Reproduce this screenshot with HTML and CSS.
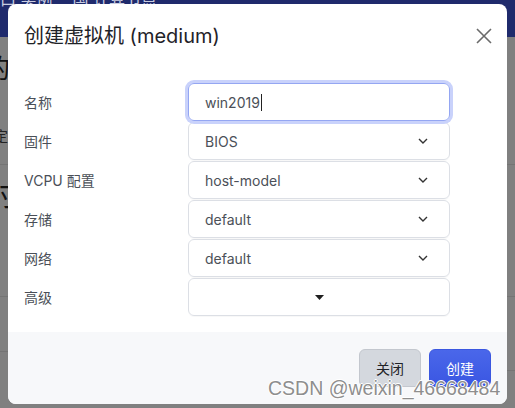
FILE: index.html
```html
<!DOCTYPE html>
<html lang="zh">
<head>
<meta charset="utf-8">
<title>创建虚拟机</title>
<link rel="stylesheet" href="styles.css">
</head>
<body>
<div class="page">
  <div class="nav">
    <span class="nav-item">口 实例</span>
    <span class="nav-item">国 计算节点</span>
  </div>
  <div class="content">
    <div class="sec sec1">
      <div class="big">的</div>
      <div class="small">定</div>
    </div>
    <div class="sec sec2">
      <div class="big2">村</div>
    </div>
    <div class="sec3">
      <div class="half-l"></div>
      <div class="half-r"></div>
    </div>
  </div>
</div>

<div class="modal">
  <div class="modal-header">
    <h1 class="title">创建虚拟机 (medium)</h1>
    <svg class="close" width="16" height="16" viewBox="0 0 16 16"><path d="M1 1 L15 15 M15 1 L1 15" stroke="#6b6b6b" stroke-width="1.6" fill="none"/></svg>
  </div>
  <div class="modal-body">
    <div class="label">名称</div>
    <div class="field input-focus"><span class="value">win2019</span><span class="cursor"></span></div>

    <div class="label">固件</div>
    <div class="field select"><span class="value">BIOS</span><svg class="chev" width="10" height="6" viewBox="0 0 10 6"><path d="M1 1 L5 5 L9 1" stroke="#333" stroke-width="1.4" fill="none"/></svg></div>

    <div class="label">VCPU 配置</div>
    <div class="field select"><span class="value">host-model</span><svg class="chev" width="10" height="6" viewBox="0 0 10 6"><path d="M1 1 L5 5 L9 1" stroke="#333" stroke-width="1.4" fill="none"/></svg></div>

    <div class="label">存储</div>
    <div class="field select"><span class="value">default</span><svg class="chev" width="10" height="6" viewBox="0 0 10 6"><path d="M1 1 L5 5 L9 1" stroke="#333" stroke-width="1.4" fill="none"/></svg></div>

    <div class="label">网络</div>
    <div class="field select"><span class="value">default</span><svg class="chev" width="10" height="6" viewBox="0 0 10 6"><path d="M1 1 L5 5 L9 1" stroke="#333" stroke-width="1.4" fill="none"/></svg></div>

    <div class="label">高级</div>
    <div class="field advanced"><svg width="9" height="5" viewBox="0 0 9 5"><path d="M0 0 H9 L4.5 5 Z" fill="#1f1f1f"/></svg></div>
  </div>
  <div class="modal-footer">
    <button class="btn btn-close">关闭</button>
    <button class="btn btn-create">创建</button>
  </div>
</div>

<div class="watermark">CSDN @weixin_46668484</div>
</body>
</html>
```

FILE: styles.css
```css
html, body {
  margin: 0;
  padding: 0;
}
body {
  width: 515px;
  height: 408px;
  overflow: hidden;
  position: relative;
  background: #808080;
  font-family: Inter, "Noto Sans CJK SC", sans-serif;
}
.page {
  display: flex;
  flex-direction: column;
  height: 408px;
}
.nav {
  height: 37px;
  background: #1f2a6c;
  display: flex;
  gap: 20px;
  padding-left: 0;
  overflow: hidden;
}
.nav-item {
  color: #c9cde0;
  font-size: 16px;
  line-height: 16px;
  margin-top: -9px;
  white-space: nowrap;
}
.content {
  flex: 1;
  background: #808080;
  overflow: hidden;
}
.sec {
  border-bottom: 1px solid #747474;
  overflow: hidden;
}
.sec1 {
  height: 127px;
}
.big {
  font-size: 26px;
  line-height: 26px;
  margin-top: 19px;
  margin-left: -16px;
  color: #111;
}
.small {
  font-size: 14px;
  line-height: 14px;
  margin-top: 47px;
  margin-left: -6px;
  color: #222;
}
.sec2 {
  height: 131px;
}
.big2 {
  font-size: 30px;
  line-height: 30px;
  margin-top: 14px;
  margin-left: -14px;
  color: #111;
}
.sec3 {
  display: flex;
  align-items: flex-start;
}
.half-l {
  width: 50%;
  height: 54px;
  border-bottom: 1px solid #747474;
}
.half-r {
  width: 50%;
  height: 73px;
  border-bottom: 1px solid #747474;
}

.modal {
  position: absolute;
  left: 8px;
  top: 4px;
  width: 499px;
  height: 400px;
  background: #fff;
  border-radius: 8px;
  overflow: hidden;
  display: flex;
  flex-direction: column;
}
.modal-header {
  height: 64px;
  display: flex;
  align-items: center;
  justify-content: space-between;
  padding: 0 16px;
}
.title {
  margin: 0;
  font-size: 20px;
  font-weight: 400;
  color: #1f2328;
  line-height: 28px;
}
.close {
  display: block;
  margin-right: -1px;
}
.modal-body {
  flex: 1;
  display: grid;
  grid-template-columns: 164px 262px;
  row-gap: 1px;
  padding: 15px 57px 16px 16px;
  align-content: start;
}
.label {
  font-size: 14px;
  color: #4a4f57;
  display: flex;
  align-items: center;
  height: 38px;
}
.field {
  box-sizing: border-box;
  height: 38px;
  border: 1px solid #dcdfe5;
  border-radius: 6px;
  display: flex;
  align-items: center;
  padding: 0 16px;
  font-size: 14px;
  color: #4b5058;
  box-shadow: 0 1px 1px rgba(0, 0, 0, 0.03);
}
.input-focus {
  border-color: #94a6f2;
  box-shadow: 0 0 0 3px #c9d2fb;
  position: relative;
  z-index: 1;
}
.cursor {
  display: inline-block;
  width: 1px;
  height: 17px;
  background: #222;
  margin-left: 1px;
}
.select {
  justify-content: space-between;
}
.chev {
  display: block;
  margin-right: 5px;
}
.advanced {
  justify-content: center;
}
.advanced svg {
  display: block;
}
.modal-footer {
  height: 72px;
  box-sizing: border-box;
  background: #f7f8fa;
  display: flex;
  justify-content: flex-end;
  align-items: center;
  gap: 8px;
  padding: 0 16px;
}
.btn {
  width: 62px;
  height: 38px;
  border-radius: 6px;
  font-family: Inter, "Noto Sans CJK SC", sans-serif;
  font-size: 14px;
  padding: 0;
}
.btn-close {
  background: #d4d8de;
  border: 1px solid #c3c7ce;
  color: #1f2328;
}
.btn-create {
  background: linear-gradient(#4a67ea, #3a56e2);
  border: 1px solid #3b57e0;
  color: #fff;
}
.watermark {
  position: absolute;
  left: 268px;
  top: 376px;
  font-family: "Liberation Sans", Arial, sans-serif;
  font-size: 19.5px;
  line-height: 24px;
  color: #8e8e8e;
  white-space: nowrap;
  text-shadow: -1px 0 #fff, 1px 0 #fff, 0 -1px #fff, 0 1px #fff;
}
```
